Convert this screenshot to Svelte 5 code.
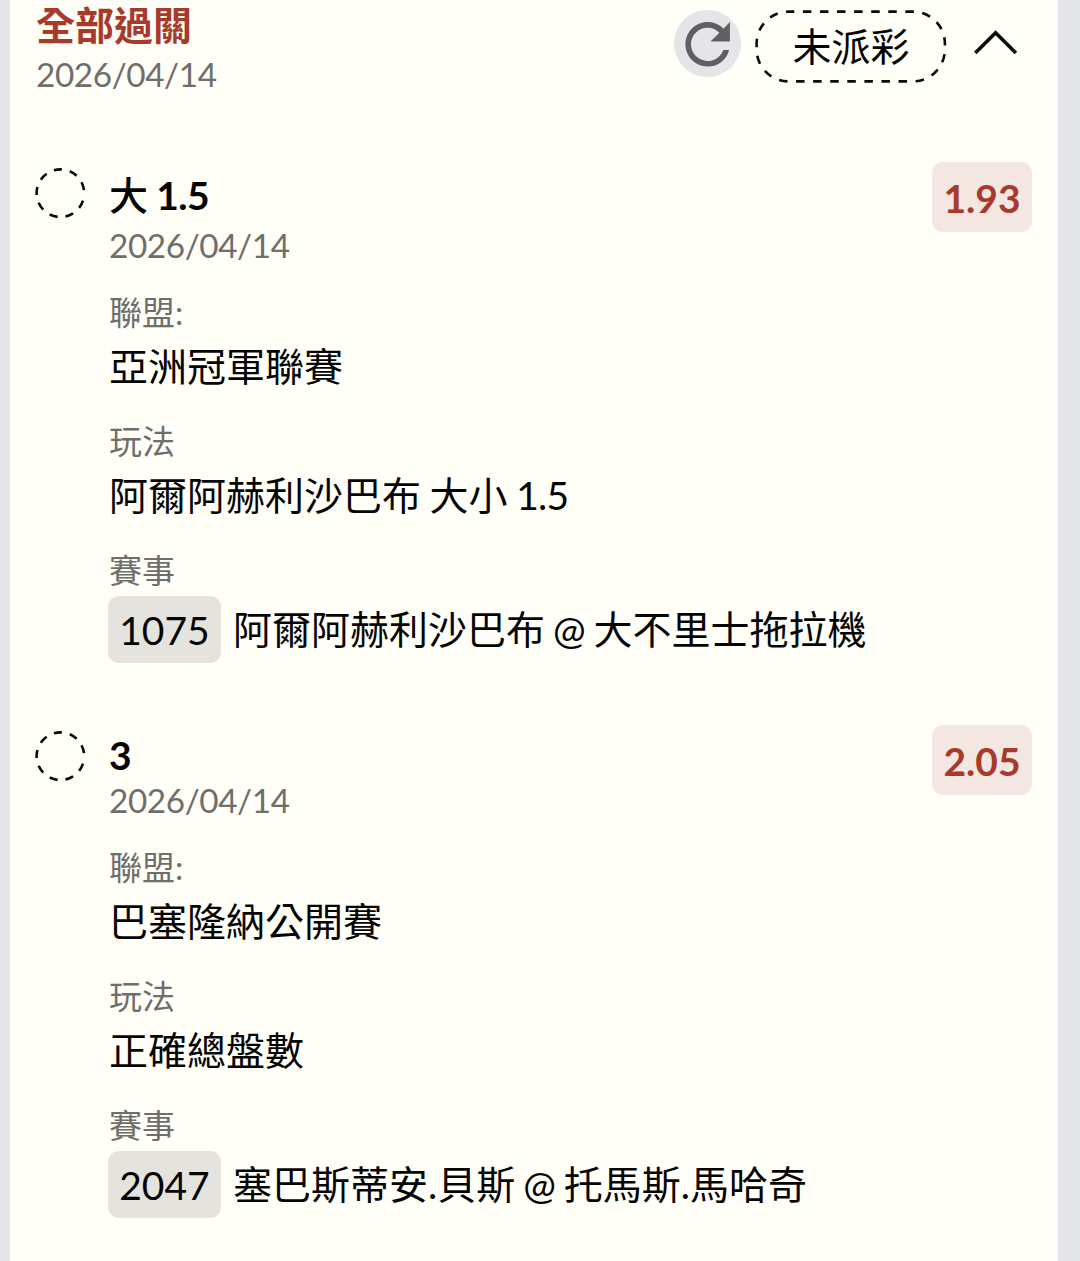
<script lang="ts">
	interface Leg {
		pick: string;
		line?: string;
		date: string;
		odds: string;
		league: string;
		market: string;
		code: string;
		match: string;
	}

	const legs: Leg[] = [
		{
			pick: '大',
			line: '1.5',
			date: '2026/04/14',
			odds: '1.93',
			league: '亞洲冠軍聯賽',
			market: '阿爾阿赫利沙巴布 大小',
			code: '1075',
			match: '阿爾阿赫利沙巴布 @ 大不里士拖拉機'
		},
		{
			pick: '3',
			date: '2026/04/14',
			odds: '2.05',
			league: '巴塞隆納公開賽',
			market: '正確總盤數',
			code: '2047',
			match: '塞巴斯蒂安.貝斯 @ 托馬斯.馬哈奇'
		}
	];
</script>

<main class="page">
	<section class="slip">
		<header class="slip-head">
			<div class="heading">
				<h1>全部過關</h1>
				<span class="date">2026/04/14</span>
			</div>
			<div class="actions">
				<button class="refresh" aria-label="refresh">
					<svg viewBox="0 0 67 67" width="67" height="67">
						<path
							transform="translate(.3 1) scale(2.78)"
							fill="#606062"
							d="M17.65 6.35C16.2 4.9 14.21 4 12 4c-4.42 0-7.99 3.58-7.99 8s3.57 8 7.99 8c3.73 0 6.84-2.55 7.73-6h-2.08c-.82 2.33-3.04 4-5.65 4-3.31 0-6-2.69-6-6s2.69-6 6-6c1.66 0 3.14.69 4.22 1.78L13 11h7V4l-2.35 2.35z"
						/>
					</svg>
				</button>
				<span class="status">
					<svg class="outline" viewBox="0 0 192 74" width="192" height="74">
						<rect x="1.6" y="1.6" width="188.3" height="69.8" rx="32" />
					</svg>
					未派彩
				</span>
				<button class="toggle" aria-label="collapse">
					<svg viewBox="0 0 46 28" width="46" height="28">
						<path d="M2.3 25 22.6 4.8l20.3 20.2" fill="none" stroke="#0c0c0c" stroke-width="3.7" />
					</svg>
				</button>
			</div>
		</header>

		{#each legs as leg, i (i)}
			<article class="leg">
				<svg class="pending" viewBox="0 0 52 52" width="52" height="52">
					<circle cx="26.4" cy="26.2" r="23.8" />
				</svg>
				<div class="detail">
					{#if leg.line}
						<h2 class="cjk"><span>{leg.pick}</span> {leg.line}</h2>
					{:else}
						<h2>{leg.pick}</h2>
					{/if}
					<span class="date">{leg.date}</span>
					<dl>
						<dt>聯盟:</dt>
						<dd>{leg.league}</dd>
						<dt>玩法</dt>
						<dd class="market">
							{leg.market}
							{#if leg.line}<span>{leg.line}</span>{/if}
						</dd>
						<dt>賽事</dt>
						<dd class="match"><span class="code">{leg.code}</span>{leg.match}</dd>
					</dl>
				</div>
				<strong class="odds">{leg.odds}</strong>
			</article>
		{/each}
	</section>
</main>

<style>
	:global(body) {
		margin: 0;
		background: #e4e5e8;
	}

	.page {
		height: 1261px;
		overflow: hidden;
		padding: 0 22px 0 10px;
		box-sizing: border-box;
		font-family: Lato, 'Noto Sans CJK TC', sans-serif;
		word-spacing: -2px;
		color: #050505;
	}

	.slip {
		height: 100%;
		box-sizing: border-box;
		padding: 0 26px 0 24px;
		background: #fffef7;
	}

	.slip-head {
		display: flex;
		justify-content: space-between;
		height: 162px;
	}

	.heading {
		padding-left: 2px;
	}

	h1 {
		margin: 0;
		height: 49px;
		line-height: 50px;
		font-size: 39px;
		font-weight: 700;
		color: #a83a2c;
	}

	.date {
		display: block;
		height: 50px;
		line-height: 50px;
		font-size: 33.3px;
		letter-spacing: -0.4px;
		color: #6e6e6b;
	}

	.actions {
		display: flex;
		align-items: flex-start;
		padding: 10px 13px 0 0;
	}

	button {
		display: block;
		padding: 0;
		border: 0;
		background: none;
	}

	svg {
		display: block;
	}

	.refresh {
		border-radius: 50%;
		background: #e4e5e8;
	}

	.status {
		position: relative;
		width: 192px;
		height: 74px;
		margin: 0 26px 0 14px;
		line-height: 73px;
		text-align: center;
		font-size: 39px;
	}

	.outline {
		position: absolute;
		inset: 0;
	}

	.outline rect {
		fill: none;
		stroke: #0a0a0a;
		stroke-width: 2.6;
		stroke-dasharray: 8.5 8.58;
		stroke-dashoffset: 2.8;
	}

	.toggle {
		margin-top: 18px;
	}

	.leg {
		display: flex;
		align-items: flex-start;
		height: 563px;
	}

	.pending {
		flex: none;
		margin: 5px 23px 0 0;
	}

	.pending circle {
		fill: none;
		stroke: #0a0a0a;
		stroke-width: 2.6;
		stroke-dasharray: 8.2 8;
		stroke-dashoffset: -7.6;
	}

	.detail {
		flex: 1;
	}

	h2 {
		margin: 0;
		padding-top: 5px;
		height: 44.5px;
		line-height: 50px;
		font-size: 39px;
		font-weight: 700;
		letter-spacing: -0.6px;
		word-spacing: 0;
	}

	h2.cjk {
		padding-top: 8px;
		height: 50px;
	}

	h2 span {
		font-weight: 500;
	}

	dl {
		margin: 16px 0 0;
	}

	dt {
		height: 52px;
		line-height: 52px;
		font-size: 33px;
		color: #6e6e6b;
	}

	dd {
		margin: 0 0 20px;
		height: 57px;
		line-height: 57px;
		font-size: 39px;
	}

	.market {
		word-spacing: -1.4px;
	}

	.market span {
		letter-spacing: -0.8px;
	}

	.match {
		display: flex;
		align-items: center;
		height: 67px;
		margin-left: -1px;
		line-height: 67px;
	}

	.code {
		width: 113px;
		height: 67px;
		margin-right: 12px;
		border-radius: 11px;
		background: #e4e3dd;
		line-height: 69px;
		text-align: center;
	}

	.odds {
		width: 100px;
		height: 70px;
		border-radius: 11px;
		background: #f4e6e0;
		line-height: 73px;
		text-align: center;
		font-size: 39px;
		color: #a83a2c;
	}
</style>
